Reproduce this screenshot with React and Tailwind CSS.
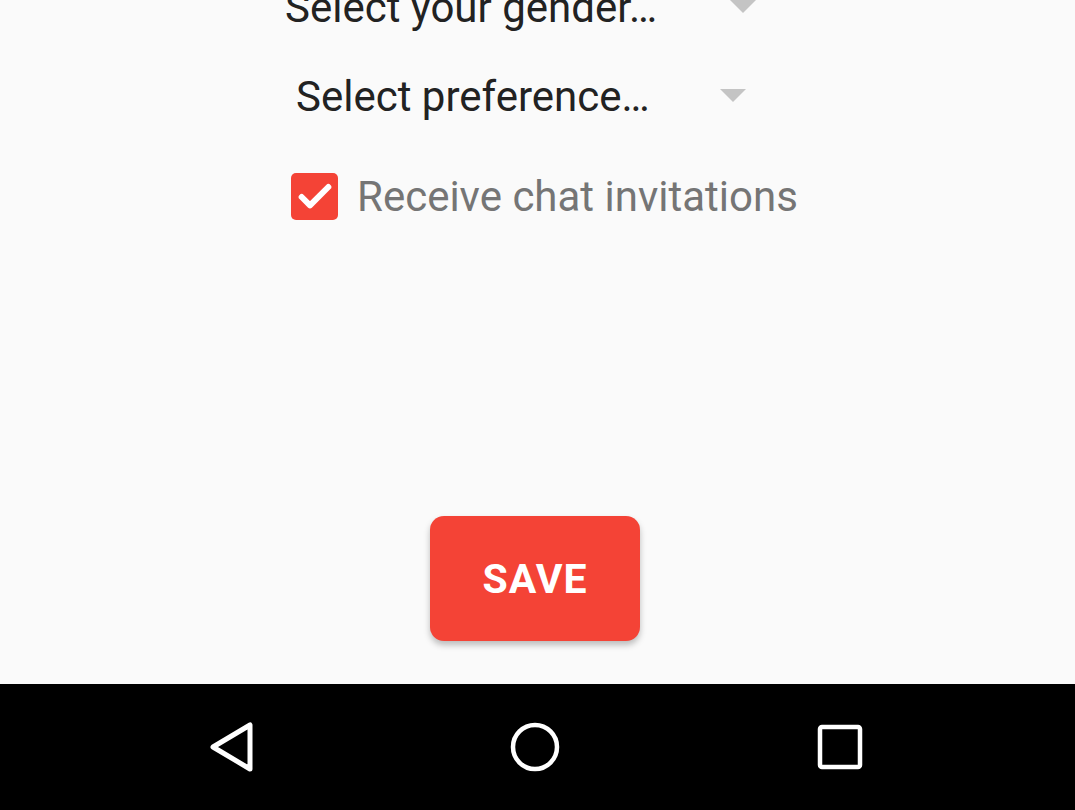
import { Check } from 'lucide-react';

function Caret() {
  return (
    <svg width="26" height="13" viewBox="0 0 26 13" className="shrink-0">
      <path d="M0 0 L26 0 L13 13 Z" fill="#c4c4c4" />
    </svg>
  );
}

function SpinnerRow({ label, textLeft, caretLeft }) {
  return (
    <div className="relative h-[89px]">
      <span
        className="absolute top-[17px] whitespace-nowrap text-[42px] leading-[49px] text-[#222222]"
        style={{ left: textLeft }}
      >
        {label}
      </span>
      <div className="absolute top-[34px]" style={{ left: caretLeft }}>
        <Caret />
      </div>
    </div>
  );
}

export default function App() {
  return (
    <div
      className="flex h-[810px] w-[1075px] flex-col overflow-hidden bg-[#fafafa]"
      style={{ fontFamily: 'Roboto, "Noto Sans", sans-serif' }}
    >
      {/* Form */}
      <div className="mt-[-34px]">
        <SpinnerRow label="Select your gender…" textLeft={285} caretLeft={730} />
        <SpinnerRow label="Select preference…" textLeft={296} caretLeft={720} />

        <div className="mt-[28px] flex items-center pl-[291px]">
          <span className="flex h-[47px] w-[47px] items-center justify-center rounded-[5px] bg-[#f44336]">
            <Check size={40} strokeWidth={3.6} color="#ffffff" />
          </span>
          <span className="ml-[19px] whitespace-nowrap text-[42px] leading-[49px] text-[#757575]">
            Receive chat invitations
          </span>
        </div>
      </div>

      <div className="flex-1" />

      {/* Save */}
      <div className="mb-[43px] flex justify-center">
        <button className="ml-[-5px] flex h-[125px] w-[210px] items-center justify-center rounded-[14px] bg-[#f44336] pt-[2px] text-[41px] font-bold tracking-wide text-white shadow-[0_4px_6px_rgba(0,0,0,0.25)]">
          SAVE
        </button>
      </div>

      {/* Nav bar */}
      <div className="flex h-[126px] items-center bg-black">
        <div className="flex w-full items-center justify-between pl-[209px] pr-[212px]">
          <svg width="46" height="50" viewBox="0 0 46 50">
            <path
              d="M41 3 L41 47 L4 25 Z"
              fill="none"
              stroke="#ffffff"
              strokeWidth="5"
              strokeLinejoin="round"
            />
          </svg>
          <svg width="50" height="50" viewBox="0 0 50 50" className="ml-[-2px]">
            <circle cx="25" cy="25" r="22" fill="none" stroke="#ffffff" strokeWidth="4.5" />
          </svg>
          <svg width="46" height="46" viewBox="0 0 46 46">
            <rect x="3" y="3" width="40" height="40" rx="2" fill="none" stroke="#ffffff" strokeWidth="4.5" />
          </svg>
        </div>
      </div>
    </div>
  );
}
